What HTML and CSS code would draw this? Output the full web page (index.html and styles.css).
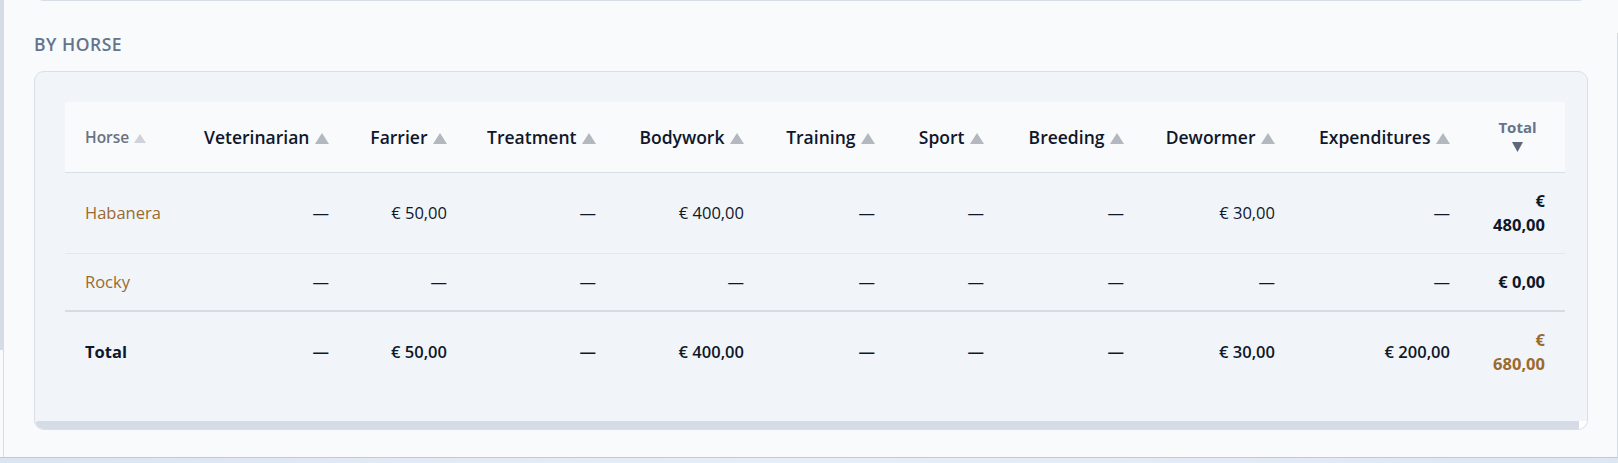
FILE: index.html
```html
<!DOCTYPE html>
<html>
<head>
<meta charset="utf-8">
<meta name="viewport" content="width=device-width, initial-scale=1">
<link rel="stylesheet" href="styles.css">
</head>
<body>
<div class="app">
  <div class="side-scroll"><div class="side-thumb"></div></div>

  <main class="main">
    <div class="prev-card"></div>

    <section class="section">
      <h2 class="section-title">By horse</h2>

      <div class="card">
        <div class="card-scroll">
          <table class="report">
            <colgroup>
              <col style="width: 117px">
              <col style="width: 167px">
              <col style="width: 118px">
              <col style="width: 149px">
              <col style="width: 148px">
              <col style="width: 131px">
              <col style="width: 109px">
              <col style="width: 140px">
              <col style="width: 151px">
              <col style="width: 175px">
              <col style="width: 95px">
            </colgroup>
            <thead>
              <tr>
                <th class="th-horse">Horse <svg class="sort" width="12" height="9" viewBox="0 0 12 9"><path d="M6 0L12 9H0z"/></svg></th>
                <th>Veterinarian <svg class="sort" width="14" height="11" viewBox="0 0 14 11"><path d="M7 0L14 11H0z"/></svg></th>
                <th>Farrier <svg class="sort" width="14" height="11" viewBox="0 0 14 11"><path d="M7 0L14 11H0z"/></svg></th>
                <th>Treatment <svg class="sort" width="14" height="11" viewBox="0 0 14 11"><path d="M7 0L14 11H0z"/></svg></th>
                <th>Bodywork <svg class="sort" width="14" height="11" viewBox="0 0 14 11"><path d="M7 0L14 11H0z"/></svg></th>
                <th>Training <svg class="sort" width="14" height="11" viewBox="0 0 14 11"><path d="M7 0L14 11H0z"/></svg></th>
                <th>Sport <svg class="sort" width="14" height="11" viewBox="0 0 14 11"><path d="M7 0L14 11H0z"/></svg></th>
                <th>Breeding <svg class="sort" width="14" height="11" viewBox="0 0 14 11"><path d="M7 0L14 11H0z"/></svg></th>
                <th>Dewormer <svg class="sort" width="14" height="11" viewBox="0 0 14 11"><path d="M7 0L14 11H0z"/></svg></th>
                <th>Expenditures <svg class="sort" width="14" height="11" viewBox="0 0 14 11"><path d="M7 0L14 11H0z"/></svg></th>
                <th class="th-total">Total <svg class="sort-active" width="11" height="10" viewBox="0 0 11 10"><path d="M0 0H11L5.5 10z"/></svg></th>
              </tr>
            </thead>
            <tbody>
              <tr>
                <td class="horse">Habanera</td>
                <td>&mdash;</td>
                <td>&euro; 50,00</td>
                <td>&mdash;</td>
                <td>&euro; 400,00</td>
                <td>&mdash;</td>
                <td>&mdash;</td>
                <td>&mdash;</td>
                <td>&euro; 30,00</td>
                <td>&mdash;</td>
                <td class="total">&euro; 480,00</td>
              </tr>
              <tr>
                <td class="horse">Rocky</td>
                <td>&mdash;</td>
                <td>&mdash;</td>
                <td>&mdash;</td>
                <td>&mdash;</td>
                <td>&mdash;</td>
                <td>&mdash;</td>
                <td>&mdash;</td>
                <td>&mdash;</td>
                <td>&mdash;</td>
                <td class="total">&euro; 0,00</td>
              </tr>
            </tbody>
            <tfoot>
              <tr>
                <td class="label">Total</td>
                <td>&mdash;</td>
                <td>&euro; 50,00</td>
                <td>&mdash;</td>
                <td>&euro; 400,00</td>
                <td>&mdash;</td>
                <td>&mdash;</td>
                <td>&mdash;</td>
                <td>&euro; 30,00</td>
                <td>&euro; 200,00</td>
                <td class="grand">&euro; 680,00</td>
              </tr>
            </tfoot>
          </table>
        </div>
        <div class="scrollbar"><div class="thumb"></div></div>
      </div>
    </section>
  </main>

  <div class="page-scroll"></div>
</div>
<div class="taskbar"></div>
</body>
</html>
```

FILE: styles.css
```css
html, body {
  margin: 0;
  padding: 0;
}

body {
  font-family: "Open Sans", "Noto Sans", sans-serif;
  background-color: #f8fafc;
  color: #0f172a;
  overflow: hidden;
}

.app {
  display: flex;
  height: 457px;
  overflow: hidden;
  border-bottom: 1px solid #c3c9d2;
}

.side-scroll {
  width: 3px;
  flex: none;
}

.side-thumb {
  height: 350px;
  background-color: #d5dce5;
}

.main {
  flex: 1;
  border-left: 1px solid #d5dce5;
  padding: 0 29px 0 30px;
}

.page-scroll {
  width: 1px;
  flex: none;
  margin-top: 33px;
  background-color: #d5dce5;
}

.taskbar {
  height: 5px;
  background: linear-gradient(90deg, #dbe5f2, #e6eef8 50%, #dde7f4);
}

/* bottom edge of the card above */
.prev-card {
  height: 10px;
  margin-top: -10px;
  border: 1px solid #d5dce5;
  border-top: none;
  border-radius: 0 0 10px 10px;
}

.section-title {
  margin: 31px 0 15px 0;
  font-size: 17.5px;
  line-height: 24px;
  font-weight: 600;
  letter-spacing: 0.03em;
  text-transform: uppercase;
  color: #64748b;
}

.card {
  background-color: #f1f5f9;
  border: 1px solid #d8dfe7;
  border-radius: 10px;
  overflow: hidden;
}

.card-scroll {
  padding: 30px 22px 29px 30px;
}

.report {
  width: 1500px;
  table-layout: fixed;
  border-collapse: collapse;
  font-size: 16.5px;
}

.report th {
  background-color: #f8fafc;
  padding: 15px 20px;
  line-height: 20px;
  font-size: 17.5px;
  font-weight: 600;
  text-align: right;
  white-space: nowrap;
  color: #0f172a;
  border-bottom: 1px solid #d8dfe7;
  vertical-align: middle;
}

.sort {
  fill: #b3b7be;
  margin-left: 1px;
}

.report th.th-horse {
  text-align: left;
  font-size: 15.5px;
  font-weight: 600;
  color: #6b7280;
}

.th-horse .sort {
  fill: #cfd3d9;
}

.report th.th-total {
  text-align: center;
  font-size: 15px;
  font-weight: 700;
  color: #64748b;
}

.sort-active {
  display: block;
  margin: 5px auto;
  fill: #5d687a;
}

.report td {
  padding: 16px 20px;
  line-height: 24px;
  text-align: right;
  color: #0f172a;
  border-bottom: 1px solid #e2e8f0;
}

.report tbody tr:last-child td {
  border-bottom: 2px solid #d5dce5;
}

.report td.horse {
  text-align: left;
  font-weight: 500;
  color: #9a6a2e;
}

.report td.total {
  font-weight: 700;
}

.report tfoot td {
  border-bottom: none;
  font-weight: 600;
}

.report tfoot td.label {
  text-align: left;
  font-weight: 700;
}

.report tfoot td.grand {
  font-weight: 700;
  color: #9a6a2e;
}

.scrollbar {
  display: flex;
  height: 8px;
}

.thumb {
  flex: 1;
  background-color: #d5dce5;
  border-radius: 4px 0 0 4px;
}

.scrollbar::after {
  content: "";
  width: 8px;
  background-color: #ffffff;
}
```
